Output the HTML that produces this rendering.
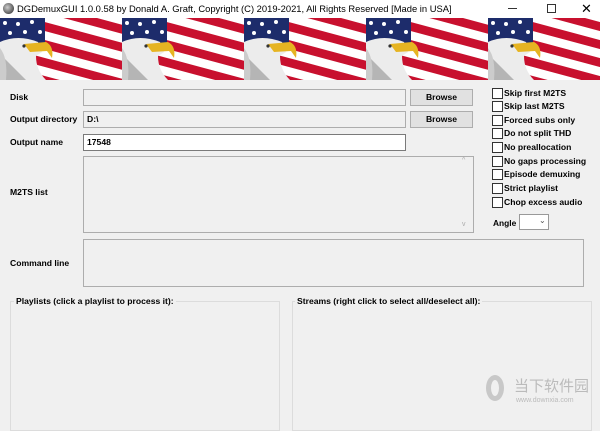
<!DOCTYPE html>
<html><head><meta charset="utf-8"><style>
*{margin:0;padding:0;box-sizing:border-box}
body{width:600px;height:418px;overflow:hidden;background:#f0f0f0;position:relative;font-family:"Liberation Sans",Arial,sans-serif;font-size:8.6px;font-weight:bold;color:#000}
.a{position:absolute}
.tb{position:absolute;border:1px solid #adadad;background:#f0f0f0}
.w{background:#fff;border-color:#7a7a7a}
.btn{position:absolute;background:#e1e1e1;border:1px solid #adadad;text-align:center;line-height:15px}
.cb{position:absolute;left:492px;height:12px;line-height:11px;padding-left:12px;white-space:nowrap}
.cb:before{content:"";position:absolute;left:0;top:0;width:9px;height:9px;border:1px solid #333;background:#fff}
.grp{position:absolute;border:1px solid #dcdcdc}
.gl{position:absolute;background:#f0f0f0;padding:0 2px}
</style></head><body>
<div class="a" style="left:0;top:0;width:600px;height:18px;background:#fff"></div>
<div class="a" style="left:3px;top:3px;width:11px;height:11px;border-radius:50%;background:radial-gradient(circle at 40% 40%,#ccc,#555 70%)"></div>
<div class="a" style="left:17px;top:3px;font-weight:normal;font-size:9.4px;white-space:nowrap">DGDemuxGUI 1.0.0.58 by Donald A. Graft, Copyright (C) 2019-2021, All Rights Reserved [Made in USA]</div>
<div class="a" style="left:508px;top:8px;width:9px;height:1px;background:#333"></div>
<div class="a" style="left:547px;top:4px;width:9px;height:9px;border:1px solid #333"></div>
<div class="a" style="left:581px;top:1px;font-size:13px;font-weight:normal">✕</div>
<svg class="a" style="left:0;top:18px" width="600" height="62">
<defs>
<pattern id="p" width="122" height="62" patternUnits="userSpaceOnUse">
<rect width="122" height="62" fill="#fff"/>
<g transform="skewY(15)">
<rect x="40" y="-26" width="90" height="9" fill="#c8102e"/>
<rect x="40" y="-8" width="90" height="9" fill="#c8102e"/>
<rect x="40" y="10" width="90" height="9" fill="#c8102e"/>
<rect x="30" y="28" width="100" height="9" fill="#c8102e"/>
<rect x="20" y="46" width="110" height="9" fill="#c8102e"/>
</g>
<rect x="0" y="0" width="45" height="28" fill="#1d2c6b"/>
<g fill="#fff"><circle cx="5" cy="5" r="2"/><circle cx="18" cy="6" r="2"/><circle cx="32" cy="4" r="2"/><circle cx="40" cy="14" r="2"/><circle cx="10" cy="15" r="2"/><circle cx="25" cy="14" r="2"/></g>
<path d="M0 24 Q18 16 38 24 L42 34 L36 38 Q36 52 46 62 L0 62Z" fill="#ececec"/>
<path d="M0 36 Q14 50 26 62 L0 62Z" fill="#b5b5b5"/>
<path d="M0 30 Q8 40 6 62 L0 62Z" fill="#ccc"/>
<path d="M24 26 L46 24 Q54 28 52 40 L47 33 L30 34 Z" fill="#e6b422"/>
<circle cx="24" cy="28" r="1.6" fill="#333"/>
</pattern></defs>
<rect width="600" height="62" fill="url(#p)"/>
</svg>
<div class="a" style="left:10px;top:92px">Disk</div>
<div class="a" style="left:10px;top:114px">Output directory</div>
<div class="a" style="left:10px;top:137px">Output name</div>
<div class="a" style="left:10px;top:187px">M2TS list</div>
<div class="a" style="left:10px;top:258px">Command line</div>
<div class="tb" style="left:83px;top:89px;width:323px;height:17px"></div>
<div class="tb" style="left:83px;top:111px;width:323px;height:17px;padding:2px 3px">D:\</div>
<div class="tb w" style="left:83px;top:134px;width:323px;height:17px;padding:2px 3px">17548</div>
<div class="btn" style="left:410px;top:89px;width:63px;height:17px">Browse</div>
<div class="btn" style="left:410px;top:111px;width:63px;height:17px">Browse</div>
<div class="tb" style="left:83px;top:156px;width:391px;height:77px"></div>
<div class="a" style="left:462px;top:157px;font-size:7px;color:#aaa;font-weight:normal">^</div>
<div class="a" style="left:462px;top:221px;font-size:7px;color:#aaa;font-weight:normal">v</div>
<div class="tb" style="left:83px;top:239px;width:501px;height:48px"></div>
<div class="cb" style="top:88px">Skip first M2TS</div>
<div class="cb" style="top:101px">Skip last M2TS</div>
<div class="cb" style="top:115px">Forced subs only</div>
<div class="cb" style="top:128px">Do not split THD</div>
<div class="cb" style="top:142px">No preallocation</div>
<div class="cb" style="top:156px">No gaps processing</div>
<div class="cb" style="top:169px">Episode demuxing</div>
<div class="cb" style="top:183px">Strict playlist</div>
<div class="cb" style="top:197px">Chop excess audio</div>
<div class="a" style="left:493px;top:218px;font-size:8.4px">Angle</div>
<div class="tb w" style="left:519px;top:214px;width:30px;height:16px;border-color:#999"></div>
<div class="a" style="left:539px;top:216px;font-size:8px;color:#555;font-weight:normal">⌄</div>
<div class="grp" style="left:10px;top:301px;width:270px;height:130px"></div>
<div class="gl" style="left:14px;top:296px">Playlists (click a playlist to process it):</div>
<div class="grp" style="left:292px;top:301px;width:300px;height:130px"></div>
<div class="gl" style="left:295px;top:296px">Streams (right click to select all/deselect all):</div>
<div class="a" style="left:486px;top:375px;width:18px;height:26px;border:5px solid #c8c8c8;border-radius:50%"></div>
<div class="a" style="left:514px;top:375px;font-size:15px;font-weight:normal;color:#bbb;font-family:'Noto Sans CJK SC',sans-serif">当下软件园</div>
<div class="a" style="left:516px;top:397px;font-size:7px;font-weight:normal;color:#bbb">www.downxia.com</div>
</body></html>
